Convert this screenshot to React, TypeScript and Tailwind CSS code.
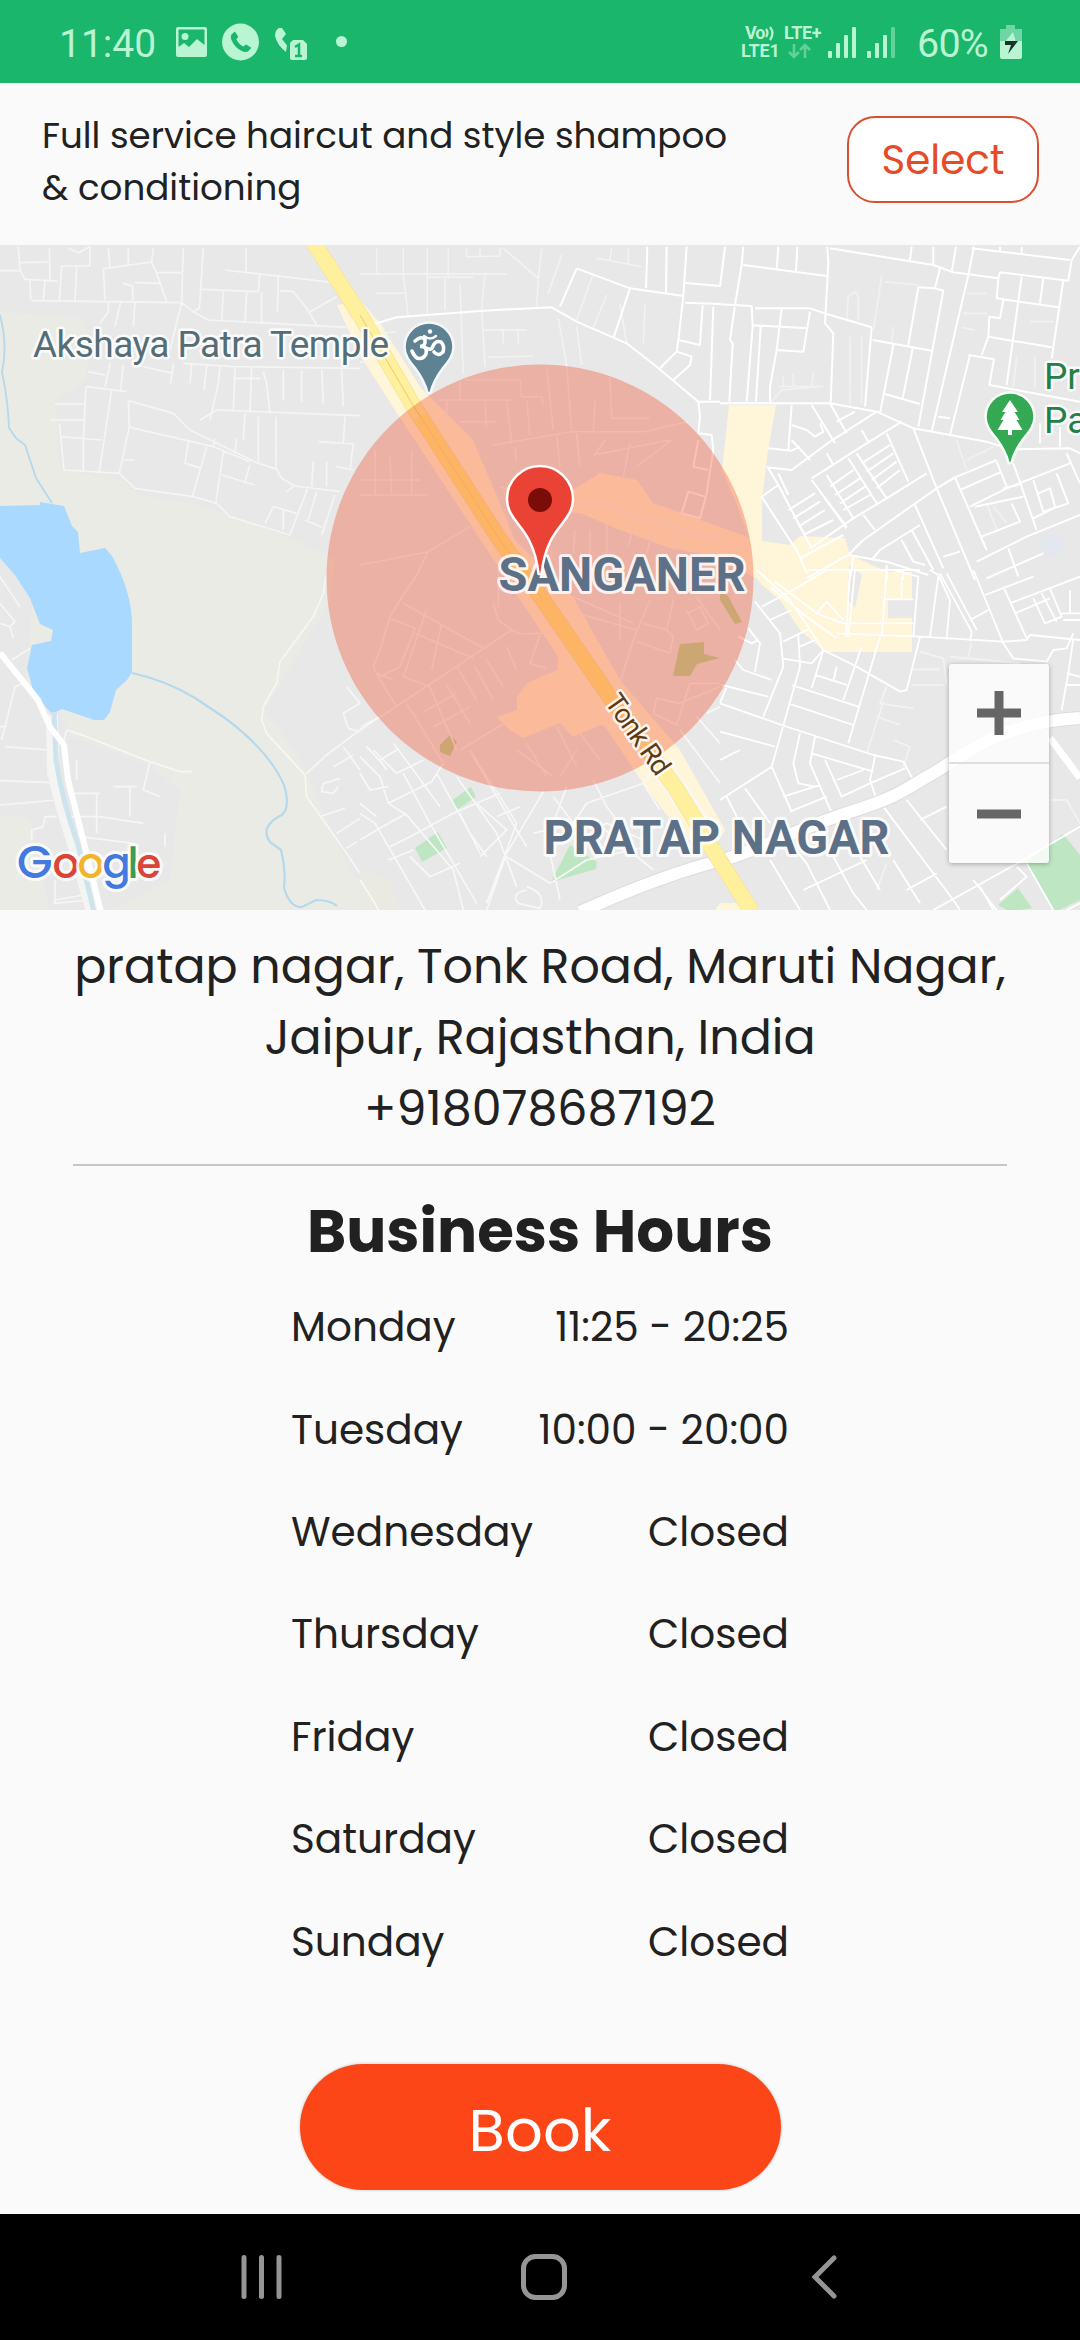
import React from "react";

const hours: [string, string][] = [
  ["Monday", "11:25 - 20:25"],
  ["Tuesday", "10:00 - 20:00"],
  ["Wednesday", "Closed"],
  ["Thursday", "Closed"],
  ["Friday", "Closed"],
  ["Saturday", "Closed"],
  ["Sunday", "Closed"],
];

const PALE = "#b9f4d3";

function StatusBar() {
  return (
    <header className="flex h-[83px] w-full shrink-0 items-start justify-between bg-[#1ab66b] pl-[59px] pr-[58px] font-['Roboto',sans-serif] text-[#b9f4d3]">
      <div className="flex items-start">
        <span className="mt-[21px] w-[117px] whitespace-nowrap text-[39px] leading-[46px]">11:40</span>
        <svg className="mt-[27px]" width="31" height="30" viewBox="0 0 31 30">
          <path fillRule="evenodd" fill={PALE} d="M2 0H29Q31 0 31 2V28Q31 30 29 30H2Q0 30 0 28V2Q0 0 2 0ZM2.500 2.500V20L8 16L13 20L21 12L28.500 18V2.500Z" />
          <circle cx="9" cy="9.500" r="3.500" fill={PALE} />
        </svg>
        <svg className="ml-[15px] mt-[23px]" width="37" height="38" viewBox="0 0 37 38">
          <circle cx="18.500" cy="19" r="18.500" fill={PALE} />
          <path transform="translate(7 7) scale(.98)" fill="#1ab66b" d="M6 1.500 2.500 4.500C.5 8 4 14 7.500 17.500S17 24 20 21.500L22.800 18.200 17.500 14.800 14.500 16.800C11.500 15.500 9 12.800 7.500 9.500L9.500 7Z" />
        </svg>
        <svg className="ml-[16px] mt-[27px]" width="32" height="33" viewBox="0 0 32 33">
          <path fill={PALE} d="M4 1Q0 3 0 9Q2 18 11 25L12 18.500L7 12L11 7L7 1Z" />
          <path fill={PALE} d="M18 13H28L32 17V31Q32 33 30 33H17Q15 33 15 31V16Z" />
          <path d="M20 20L24 17.500V29M20 29H27" stroke="#1ab66b" strokeWidth="2.500" fill="none" />
        </svg>
        <span className="ml-[29px] mt-[36px] h-[11px] w-[11px] rounded-full bg-[#b9f4d3]" />
      </div>
      <div className="flex items-start">
        <div className="mt-[24px] w-[86px] text-[18px] font-bold leading-[18px]">
          <div className="flex h-[18px] items-center whitespace-nowrap pl-[4px]">
            <span className="w-[22px] tracking-[-1px]">Vo</span>
            <svg className="-ml-[2px] w-[12px]" width="12" height="18" viewBox="0 0 12 18" fill="none" stroke={PALE} strokeWidth="2.200">
              <path d="M1 5Q4 9 1 13M5 3Q10 9 5 16" />
            </svg>
            <span className="ml-[7px] tracking-[-0.4px]">LTE+</span>
          </div>
          <div className="flex h-[18px] items-center">
            <span className="w-[47px] tracking-[-0.2px]">LTE1</span>
            <svg width="24" height="18" viewBox="0 0 24 18" fill="none" stroke="#62d29b" strokeWidth="2.600">
              <path d="M6 2V15M1 10L6 15L11 10M17 16V3M12 8L17 3L22 8" />
            </svg>
          </div>
        </div>
        <svg className="mt-[27px]" width="74" height="31" viewBox="0 0 74 31" fill={PALE}>
          <rect x="1" y="24" width="4" height="7" rx="1" />
          <rect x="9" y="16" width="4" height="15" rx="1" />
          <rect x="17" y="8" width="4" height="23" rx="1" />
          <rect x="25" y="0" width="4" height="31" rx="1" />
          <rect x="40" y="24" width="4" height="7" rx="1" />
          <rect x="48" y="16" width="4" height="15" rx="1" />
          <rect x="56" y="8" width="4" height="23" rx="1" />
          <rect x="64" y="0" width="4" height="31" rx="1" opacity=".45" />
        </svg>
        <span className="ml-[16px] mt-[21px] w-[83px] whitespace-nowrap text-[39.5px] leading-[46px] tracking-[-0.8px]">60%</span>
        <svg className="mt-[25px]" width="22" height="34" viewBox="0 0 22 34">
          <path fill="#6ed6a4" d="M6 0H15V4H22V16H0V4H6Z" />
          <path fill={PALE} d="M0 16H22V32Q22 34 20 34H2Q0 34 0 32Z" />
          <path fill={PALE} d="M13 7L5 17H16Z" />
          <path fill="#17352a" d="M5 16H18L8 29L11 20H5Z" />
        </svg>
      </div>
    </header>
  );
}

function ServiceRow() {
  return (
    <section className="flex h-[162px] shrink-0 items-start justify-between pl-[42px] pr-[41px]">
      <p className="mt-[27px] text-[35.7px] leading-[52px]">
        Full service haircut and style shampoo
        <br />
        &amp; conditioning
      </p>
      <button className="mt-[33px] h-[87px] w-[192px] rounded-[28px] border-[2.5px] border-[#d9502f] bg-white text-[40.4px] leading-[82px] text-[#e64a26]">
        Select
      </button>
    </section>
  );
}

/* Street strokes, grouped by map tile; each tile is drawn at three units per pixel. */
const tileNW =
  "M0 92H65M55 20L60 90L75 118L150 122M60 68L145 66M148 25L150 122L175 125M205 25L235 38L270 20V78H185L178 180M310 85L315 180M230 80L225 185M90 122L92 180M135 120L130 180M95 182L545 188L580 215L625 240L1040 262M310 86L455 66L460 25M385 25V78M325 25L330 85M455 66L470 100L500 185M470 98H545M405 128L480 130M368 130L398 138V182M550 25L545 185M610 25L602 150L598 205L580 215M605 148L775 155L780 100M675 90L850 110L1000 128M738 25V95M835 112L832 215M840 152L880 155L920 205L955 262M930 215L1010 170M670 152L665 240M740 155L735 245M785 155V250M545 188L510 330M405 185L400 260M362 185L345 260M325 185V215L300 250M395 372L520 400M520 370L512 430M550 370L700 380L1080 385M660 380L655 430L630 540M705 385L700 515M755 380L750 515M790 395L800 430L810 520M600 540L650 510L1080 527M850 390V480M905 390V485M965 388L970 490M1025 388L1030 500M700 415H780M575 375L570 430M620 378L612 450M265 395L315 405M330 370L315 440M370 375L362 450M260 440L380 455M258 440L250 600M335 450L298 695M385 482L388 560L358 700M165 492H255M150 540H255M178 550L192 690M180 590L305 600M192 690L358 700L405 745L580 770L650 790L690 830L870 885M250 600V695M385 482L520 520L570 570L770 668L830 688L845 715L885 738L1020 755M390 562L640 620L645 595M640 620L750 665M565 605L555 670L605 685M620 620L578 768M670 635L648 785M665 705L765 735M750 675L735 725M710 595L705 640M370 660H405M775 530V665M828 530V688M735 520L730 600M940 665L935 740M980 665V740M1035 530L1030 610M955 605L1060 612L1050 690M1010 680L1060 690M820 800L795 850M820 800L890 820M880 740L860 755M925 740L870 885M950 755L925 840M1005 765L965 885M915 840L965 862M850 810V870";
const tileN =
  "M0 102H440M130 25V100M202 25V225M265 25V115M50 25V100M130 105L145 230M202 112H340M255 115V210M300 135L310 400M375 100L365 205L375 380M50 160H140M320 25V50L420 48V25M360 25V48M605 45L565 160M700 100L650 240M740 165L700 265M755 25L750 60M805 25V75M710 55L845 80M430 25L535 115L530 200M545 25L535 115M855 195L850 310M780 190L800 310M595 235L620 375L635 575M650 260L665 375M370 270H500M430 270V310M475 270V310M385 352L520 348M0 285L110 275M0 365H30M315 420H480L485 470H545L550 495M300 425V480M235 480H455M260 480V545M375 485L380 560M440 485L455 610M500 480L510 585M300 545H410M560 385L580 570M750 410L755 535H870M705 480L700 575M400 615L635 575H850L985 545M590 580L600 680M650 580L660 680M465 620L470 665M700 645L930 600M735 600L700 650M810 610L790 710M935 600L830 680M45 630V765M90 650L95 765M155 630V765M0 765H200M0 720H180M330 860L205 935L165 1015M0 975L205 935M440 830L370 850M640 790H740L830 830L1080 900M825 840L805 920M880 870L860 940M955 880L940 930M645 870L640 940M690 870V940M740 850V940";
const tileNBright =
  "M0 265L110 232L370 212L575 202L650 245L800 310L890 380L1015 485H1080M650 85L600 200M650 85L810 145L970 168M810 145L760 295M862 20L858 145M920 20L918 160M980 20L970 168L955 300M970 128L1080 138M975 188L1080 192M1028 195L1020 315L955 300L950 335L900 385M950 335L995 350L990 375L940 420M1060 200L1050 480M1015 485L1020 530L1015 580L1055 585L1060 630L1040 760L1020 835L965 820L985 755L1035 770M1015 600L1000 680L1045 690";
const tileNE =
  "M15 20L0 140M70 20L65 75L45 195L30 300L38 310L28 485M0 193L95 198L98 260L80 485M70 75L320 108M175 20L170 90M232 20L228 95M322 20L325 70L315 250L340 280L332 490M105 205H270L320 222L455 262M98 256L265 265M185 205L170 330L150 440V485M270 215L250 335L170 330M122 260L108 485M330 25L640 75L700 97L835 115L840 97L1045 122L1055 60L1080 20M575 20L570 60M640 20V75M708 20L695 97M755 25L1050 60M762 20L745 105L635 575M840 20V35M905 20V45M660 85L645 145L595 142L565 315M645 145L670 152L595 560M455 262L435 500M458 300L635 332M520 315L480 520M578 325L548 475M495 462L600 492M835 115L830 175L1015 202M905 110L860 435M970 115L960 190M1030 120L995 355M850 180L840 235L808 230L805 290L785 345M805 290L995 322M745 345L822 358L808 435L1080 485M750 345L690 585M655 530L690 535M0 490H330L470 515L580 565L800 605L870 628L1050 625L1080 640M275 495L345 610M330 490L380 580M405 515L350 545M425 570L445 605M470 515L330 605L215 690L140 682M215 495L205 630M145 625L215 632L240 620M215 555L260 570L285 590L310 575L300 550M215 600L270 660M545 545L440 610L275 715M320 640L340 675M275 720L380 860M500 580L565 725M320 705L400 835M385 655L470 790M410 640L500 775M425 670L510 615M440 695L520 640M455 720L530 665M470 745L540 690M330 740L400 690M345 765L420 715M360 790L435 740M370 810L450 765M300 755L380 865M205 810L285 760M220 835L300 785M235 860L315 810M250 885L340 840M145 685L175 735L235 850L275 925M175 735L125 770L235 940M175 700L205 765M125 770L235 940L260 1000M620 700L500 775L400 835L270 925M240 955L370 885M430 825L465 870M580 565L650 745L765 1020M650 745L430 900L385 945L260 1015M650 745L705 712L830 660M705 712L800 930M720 750L845 695M750 800L860 745L1050 670M830 665L860 740M880 670L950 870M850 745L895 735M585 795L670 985M600 855L480 930L455 960M575 870L640 990M545 900L580 965L615 975M385 945L500 965L625 1005M400 950L390 1020M500 975V1020M550 990V1020M670 950L720 935M770 965L920 890L1080 825M785 890L900 845L875 790M765 800L910 770M940 720L970 815L1045 790L1010 700M955 760L990 745L1005 800M865 925L895 1010M800 1015L970 940M1040 640L1080 730M1020 560V620M960 550V610M940 835L1000 805";
const tileSW =
  "M0 20L60 110M0 100L45 155L30 170L0 160M30 170L40 205M90 235L35 270M70 340L45 350L5 510M0 470H20M15 530L145 540V620M0 632L150 638M0 705L170 690M200 480L260 500L450 575L540 605H575M200 480L190 520M450 575L430 660L480 680M230 570V630M290 670V790M205 670H300M340 650H410M390 650V740M205 740H300L430 760M95 780L130 770L135 740H170M95 780V810M240 800L400 820M495 790V830M165 990L280 970M160 1000L270 990M165 930V1000M978 20L970 70L940 140L840 275L830 340L790 410L785 450L800 490L915 615L920 680L1040 850L1080 910M1080 480L980 555L920 610M1040 350L1080 400L1030 430L1045 475L1080 485M1030 530L1080 600M1000 590L1060 555M1020 625L970 640L965 665L1000 670L1015 650M960 740L1035 715M1010 790L1080 745M1040 835L1070 815";
const tileS =
  "M180 0L130 75L90 140L60 240L40 290L60 330L110 410M90 145L165 175L120 290L60 320M130 100L370 235M165 190L340 265M200 120L130 320L210 350M50 310L100 330M245 160L215 300M0 470L70 435L455 180L480 192L600 188M400 100L415 150L455 180M415 0V110M290 290L350 390M345 290L400 390M440 230L470 300M540 195L510 280L560 295M380 270L430 350M205 340L290 540M140 400L250 580M260 345L330 460M190 425L290 370M220 470L330 410M300 540L450 450M500 520L560 620M590 470L650 590M660 490L720 570M470 540L580 620M600 620L650 540M330 540L420 680M870 90L820 210L780 340M940 90L920 180L850 160M920 180L940 200L930 250L830 215M1010 80L1080 180M980 120L1010 180L1045 160L1020 110L985 130M780 100V210M960 400L890 385L880 430L950 465L990 340L1080 340M960 400L1080 350M540 0L530 60M640 80L820 160M650 130L830 180";
const tileSBright =
  "M0 480L60 440M0 560L60 620L85 700L140 735L280 900L310 1020M20 530L75 590M0 610L30 660L85 650M40 540L110 610L190 570M100 520L160 600L240 710M110 540L60 570L80 600M130 610L210 760L280 880L350 1000M85 700L215 635L250 580M0 730L45 760L195 1020M0 810L50 780L140 730M0 930L45 1000L55 1020M90 830L150 800L280 730L420 670M85 870L160 840M230 610L330 790L380 860M290 620L410 790L470 950M340 560L440 730L500 830M420 680L470 760L380 1000M550 665L440 850L380 1020M410 740L480 710M350 700L440 780L360 860M300 730L360 850M150 860L210 920L300 880M580 680L640 760L520 790M620 650L580 760M700 630L740 710L800 790M640 760L680 700L850 640L870 610M700 750L880 900M850 640L900 720M440 860L570 940L680 870L860 830M570 850L600 990M700 780L740 760L870 820M1010 440L1080 520M960 480L1080 640M1040 430L1080 410M890 620L1000 780M940 590L1080 800M500 960Q450 970 475 1000L540 1015Q560 970 500 950M0 700L50 740";
const tileSE =
  "M105 95L180 190L190 290L130 440M125 110L210 65L320 0M150 150L215 120M85 175L120 220L105 305M55 200L95 220L115 210M45 270L70 300L155 330M5 345L145 380M0 400L185 465L460 555L550 575L580 630M20 350L0 400M190 215L270 175M235 195L240 290L155 590L215 725M240 230L285 210M185 265L275 280L310 240L210 90L110 0M310 240L275 355M310 240L410 290L540 365L560 360L600 200M285 315L380 345M350 290L340 335M425 230L370 390M480 200L385 520M215 345L415 410M205 400L400 465M240 490L220 580L235 640L285 650M285 500L270 580L340 740M275 550L460 605M315 570L365 680L450 640M350 630L430 600M465 560L450 630L470 690M450 640L555 595M0 485L165 530M0 690L155 590M75 655L150 760M20 680L50 740M190 680L300 645M210 725L320 680M150 50L260 140L350 205M165 35L290 130L370 160H580M290 130L320 95L370 150M350 190L600 200L850 215L920 210L930 195L1080 210M390 0L378 200M405 0L385 200M500 0L485 200M545 20V85M495 88H580M520 0L595 20L580 200M655 20L630 200M690 90L680 210M630 0L655 15L690 90M660 10L755 185L750 215M680 10L770 180M760 0L850 220L880 265L980 275L1000 240L1040 235L1060 190M750 150L805 120M795 75L940 20M850 50L920 205M870 100L1080 20M885 130L990 85M940 85L975 160L1025 140L990 55M965 70L1010 155M1025 130H1080M1030 150H1080M1050 60V130M1060 205L1045 310L1025 420M1040 345H1080M1040 310L1080 320M490 710L700 990L720 1020M560 690L680 840M600 750L680 710M150 870L240 1020M210 820L260 880L330 1020M340 860L400 970L440 1020M420 860L480 960M520 870L600 1000M250 960L440 870M560 960L650 910M640 1020L910 870L1080 770M760 930L830 1020M780 950L820 1020M890 890L920 920L840 990M920 880L1000 1020M260 0H600M1080 1000L1040 1020M0 570L60 540";
const tileSEFaint =
  "M600 245L670 265L680 345M580 298H660M575 345H670M500 350L480 400L580 415M470 440L540 465M490 395L440 550M520 510L570 530L550 590M690 260L900 280M755 220L745 260M990 690L1040 690L1080 760M500 880L470 960";

function PinShape({ fill, halo }: { fill: string; halo: string }) {
  return (
    <path
      d="M-1.500 0C-3.500 -9 -8 -17 -14 -25C-20 -32 -24.500 -38 -24.500 -46A24.500 24.500 0 0 1 24.500 -46C24.500 -38 20 -32 14 -25C8 -17 3.500 -9 1.500 0Z"
      fill={fill}
      stroke={halo}
      strokeWidth="2.500"
      strokeLinejoin="round"
    />
  );
}

function MapView() {
  return (
    <section className="relative h-[665px] w-full shrink-0 overflow-hidden bg-[#e8e8e8]">
      <svg className="block" width="1080" height="665" viewBox="0 245 1080 665" fontFamily="Roboto, sans-serif">
        <rect x="0" y="245" width="1080" height="665" fill="#e8e8e8" />
        {/* open land */}
        <path fill="#ebebe6" d="M0 312L80 318L92 345L85 380L55 400L60 470L120 480L140 495L200 505L290 538L335 560L330 600L300 650L265 710L300 760L350 870L380 912H110L170 880L180 790L150 765L70 735L55 700L25 690L35 570L0 560Z" />
        <path fill="#ebebe6" d="M0 815L30 818L50 912H0Z" />
        <path fill="#eaeae3" d="M360 870L390 880L400 912H360Z" />
        {/* commercial areas */}
        <g fill="#fff5d9">
          <path d="M729 405H776L768 450L762 500V541L790 545L800 536L845 538L850 555L888 572H912V652H825L800 630L780 600L762 585L754 575V550L735 500L722 470Z" />
          <path d="M337 305L360 300L380 323L420 387L433 400L473 440L493 487L515 540L573 597L620 680L650 715L680 750L725 830L713 850L683 837L643 783L507 580L393 407L360 355Z" />
          <path d="M500 487L573 490L600 473L637 480L653 503L720 527L756 540V578L720 558L667 547L620 530L580 513L540 510Z" />
          <path d="M560 637L557 670L527 683L517 697V710L497 717L510 730L523 738L560 723L573 737L600 725L640 735L620 680L580 640Z" />
          <path d="M720 903H740L746 910H715Z" />
        </g>
        <path fill="#e8e8e8" d="M849 565L862 575L855 608L848 600ZM888 600H912V618H888Z" />
        {/* parks */}
        <g fill="#bfe6c3">
          <path d="M451 801L471 787L476 797L458 809Z" />
          <path d="M415 848L438 832L447 848L422 862Z" />
          <path d="M551 882L570 845L597 862L596 869Z" />
          <path d="M1025 863L1063 834L1080 855V900L1055 912Z" />
          <path d="M998 905L1018 888L1032 908L1010 912Z" />
          <path d="M680 644L704 642L704 654L720 658L697 664L690 676L673 676Z" fill="#b9d9a0" />
          <path d="M440 745L450 735L457 742L450 756L440 752Z" fill="#b9d9a0" />
          <path d="M720 590L728 596L742 622L735 624L720 600Z" fill="#b9d9a0" />
        </g>
        <circle cx="1052" cy="545" r="12" fill="#e5e7ee" />
        {/* water */}
        <path fill="#a9d9ff" d="M0 506L40 505V502L64 506L72 526L78 532L80 553L105 548L112 556Q132 592 132 625V672L127 680L116 690L110 712L104 720H94L62 709L52 714L45 706L33 690L27 668L32 645L51 641L53 630L40 624L30 598L15 575L0 558Z" />
        <g fill="none" stroke="#b5d9ec" strokeWidth="1.800">
          <path d="M0 315Q8 345 2 372Q8 400 9 428L16 438L25 445L36 478L52 503" />
          <path d="M132 673Q165 680 195 698L225 718Q270 752 284 785Q292 812 278 817Q260 828 270 842L281 850Q286 870 284 888Q290 908 302 907L316 900Q330 900 337 906" strokeWidth="2.200" />
        </g>
        {/* streets */}
        <g fill="none" strokeLinejoin="round">
          <g transform="translate(0 240) scale(.33333)"><path d={tileNW} stroke="#f5f5f4" strokeWidth="5" /></g>
          <g transform="translate(360 240) scale(.33333)">
            <path d={tileN} stroke="#f3f3f3" strokeWidth="4.500" />
            <path d={tileNBright} stroke="#fff" strokeWidth="6" />
          </g>
          <g transform="translate(720 240) scale(.33333)">
            <path d="M390 290V490M425 290V490M380 240L385 170L405 155L415 170V240M485 110L460 270M495 125L595 135M520 260L515 305M220 400V440M280 400L275 440M175 440H310M740 160H800M730 220H800M725 262L765 270M930 245H1000M945 350V440M890 350L880 440M710 600L740 690M740 660L820 620M800 790L830 870M820 800L860 850M190 410V440M150 490L185 450L300 440" stroke="#f1f1f1" strokeWidth="5" />
            <path d={tileNE} stroke="#fff" strokeWidth="6" />
          </g>
          <g transform="translate(0 570) scale(.33333)"><path d={tileSW} stroke="#f6f6f5" strokeWidth="5" /></g>
          <g transform="translate(360 570) scale(.33333)">
            <path d={tileS} stroke="#f3f3f3" strokeWidth="5" />
            <path d={tileSBright} stroke="#f8f8f8" strokeWidth="5" />
          </g>
          <g transform="translate(720 570) scale(.33333)">
            <path d={tileSEFaint} stroke="#f3f3f3" strokeWidth="5" />
            <path d={tileSE} stroke="#fff" strokeWidth="5.500" />
          </g>
          <path d="M580 912C640 885 690 868 722 860S800 828 850 812S900 792 930 775S1000 722 1080 718" stroke="#dcdcdc" strokeWidth="14" />
          <path d="M580 912C640 885 690 868 722 860S800 828 850 812S900 792 930 775S1000 722 1080 718" stroke="#fff" strokeWidth="12" />
          <path d="M1050 738L1080 778" stroke="#fff" strokeWidth="7" />
          <path d="M52 715L53 770Q60 805 72 840L92 912" stroke="#f4f4f3" strokeWidth="12" />
          <path d="M54 712L56 760Q62 800 78 845L94 912" stroke="#cde3ee" strokeWidth="5" />
          <path d="M0 653L38 700L50 727L64 745L68 780L82 835L101 912" stroke="#fff" strokeWidth="6" />
        </g>
        {/* Tonk Road */}
        <path d="M312 240L362 318L414 407L500 540L543 600L607 693L677 790L713 850L752 912" fill="none" stroke="#f6e29a" strokeWidth="16.500" />
        <path d="M312 240L362 318L414 407L500 540L543 600L607 693L677 790L713 850L752 912" fill="none" stroke="#fff09e" strokeWidth="15" />
        <path d="M360 315L414 407L500 540L543 600" fill="none" stroke="#eccb74" strokeWidth="1" />

        <circle cx="540" cy="578" r="213.500" fill="#f4441a" fillOpacity=".33" />
        <path d="M420 417L500 540L543 600L607 693L640 738" fill="none" stroke="#ffb55a" strokeOpacity=".55" strokeWidth="15" />

        {/* labels */}
        <g paintOrder="stroke" strokeLinejoin="round" stroke="#fff" strokeOpacity=".85">
          <text x="33" y="356.500" fontSize="37" textLength="356" strokeWidth="5" fill="#546e78">Akshaya Patra Temple</text>
          <text x="498.500" y="591" fontSize="49" fontWeight="700" textLength="247" lengthAdjust="spacingAndGlyphs" strokeWidth="6" fill="#5c7188">SANGANER</text>
          <text x="543.500" y="854" fontSize="48.500" fontWeight="700" textLength="346" lengthAdjust="spacingAndGlyphs" strokeWidth="6" fill="#5c7188">PRATAP NAGAR</text>
          <text x="1044" y="389" fontSize="37" strokeWidth="5" fill="#1f8048">Pr</text>
          <text x="1044" y="432.500" fontSize="37" strokeWidth="5" fill="#1f8048">Pa</text>
          <text transform="translate(604 702) rotate(55)" fontSize="27.500" textLength="92" strokeWidth="5" fill="#5b3b16">Tonk Rd</text>
        </g>

        {/* temple pin */}
        <g transform="translate(429 393)">
          <PinShape fill="#5f8292" halo="#f4f8fa" />
          <g fill="none" stroke="#fff" strokeWidth="3.600" strokeLinecap="round" transform="translate(0 1)">
            <path d="M-14 -53Q-7 -59 -4 -54Q-3 -48 -9 -47.500Q-1 -48 -3 -40Q-6 -34 -12 -36Q-15 -38 -17 -43" />
            <path d="M-3 -46Q3 -43 4 -48Q7 -54 12 -52Q16 -48 14 -42Q9 -37 5 -42" />
            <path d="M-5 -58Q1 -53 7 -58" strokeWidth="2.400" />
          </g>
          <circle cx="1" cy="-61.500" r="2.200" fill="#fff" />
        </g>
        {/* park pin */}
        <g transform="translate(1010 463)">
          <PinShape fill="#34a853" halo="#f4fff6" />
          <path fill="#fff" d="M0 -63L8 -51H4.500L9.500 -43H6.500L12.500 -33H2V-28H-2V-33H-12.500L-6.500 -43H-9.500L-4.500 -51H-8Z" />
        </g>
        {/* selected place */}
        <path d="M538.500 574C537 560 535 552 529.500 541C521 524 507 516 507 499A33 33 0 0 1 573 499C573 516 559 524 550.500 541C545 552 543 560 541.500 574Z" fill="#ea4335" stroke="#fff" strokeWidth="2.500" strokeLinejoin="round" />
        <circle cx="540" cy="500" r="12" fill="#7b0d08" />

        <g fontFamily="Poppins, Inter, sans-serif" fontSize="42" fontWeight="500" paintOrder="stroke" stroke="#fff" strokeOpacity=".8" strokeWidth="6" strokeLinejoin="round">
          <text y="878">
            <tspan x="17" fontSize="46" fill="#4479e0">G</tspan>
            <tspan x="52.500" fill="#dc4437">o</tspan>
            <tspan x="77.500" fill="#f2b529">o</tspan>
            <tspan x="102.500" fill="#4479e0">g</tspan>
            <tspan x="127.500" fill="#3a9e56">l</tspan>
            <tspan x="136.500" fontSize="40" fill="#dc4437">e</tspan>
          </text>
        </g>
      </svg>
      <div className="absolute right-[31px] top-[419px] flex h-[199px] w-[100px] flex-col rounded-[3px] bg-white/80 shadow-[0_1px_5px_rgba(0,0,0,0.3)]">
        <button className="flex h-[98px] items-center justify-center" aria-label="Zoom in">
          <svg width="44" height="44" viewBox="0 0 44 44"><path d="M0 22H44M22 0V44" stroke="#666" strokeWidth="9" /></svg>
        </button>
        <div className="h-[2px] bg-[#dedede]" />
        <button className="flex h-[99px] items-center justify-center" aria-label="Zoom out">
          <svg width="44" height="44" viewBox="0 0 44 44"><path d="M0 22H44" stroke="#666" strokeWidth="9" /></svg>
        </button>
      </div>
    </section>
  );
}

export default function App() {
  return (
    <div className="flex h-[2340px] w-[1080px] flex-col overflow-hidden bg-[#fafafa] font-['Poppins','Inter',sans-serif] text-[#212121]">
      <StatusBar />
      <ServiceRow />
      <MapView />
      <section className="flex flex-1 flex-col items-center pt-[21px]">
        <address className="whitespace-nowrap text-center text-[47.5px] not-italic leading-[71px]">
          pratap nagar, Tonk Road, Maruti Nagar,
          <br />
          Jaipur, Rajasthan, India
          <br />
          +918078687192
        </address>
        <hr className="mt-[19.5px] h-[2px] w-[934px] border-0 bg-[#c6c6c6]" />
        <h2 className="mt-[26px] text-[59.5px] font-bold leading-[80px]">Business Hours</h2>
        <dl className="mt-[4.500px] w-[498px]">
          {hours.map(([day, time]) => (
            <div key={day} className="flex h-[102.4px] items-center justify-between whitespace-nowrap text-[40.6px] leading-[56px]">
              <dt>{day}</dt>
              <dd>{time}</dd>
            </div>
          ))}
        </dl>
        <button className="mt-[71px] h-[126px] w-[481px] rounded-full bg-[#fc4618] pt-[7px] text-[59.3px] leading-[83px] text-white shadow-[0_0_3px_rgba(0,0,0,0.25)]">
          Book
        </button>
      </section>
      <nav className="flex h-[126px] shrink-0 items-center justify-between bg-black pl-[241px] pr-[243px]">
        <svg width="41" height="44" viewBox="0 0 41 44"><path d="M3 2.500V41.500M20.500 2.500V41.500M38 2.500V41.500" stroke="#959595" strokeWidth="5" strokeLinecap="round" /></svg>
        <svg className="-ml-[6px]" width="46" height="46" viewBox="0 0 46 46"><rect x="2.500" y="2.500" width="41" height="41" rx="12" fill="none" stroke="#959595" strokeWidth="5" /></svg>
        <svg width="26" height="44" viewBox="0 0 26 44"><path d="M23 3L4 22L23 41" fill="none" stroke="#959595" strokeWidth="5" strokeLinecap="round" /></svg>
      </nav>
    </div>
  );
}
